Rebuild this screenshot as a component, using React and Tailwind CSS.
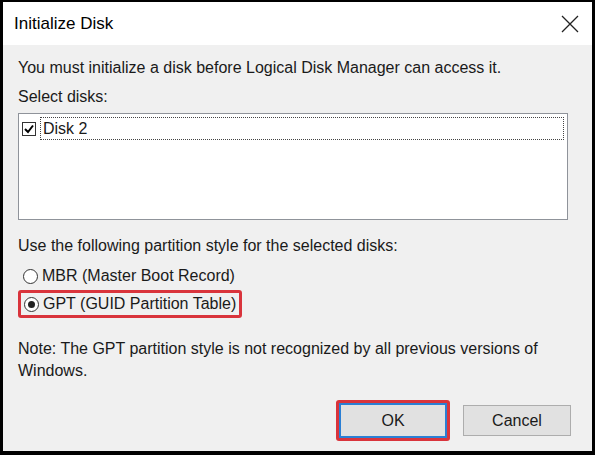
import React from 'react';

const Radio = ({ checked }) => (
    <span className="w-[15px] h-[15px] rounded-full border border-[#333] bg-white flex items-center justify-center shrink-0">
        {checked && <span className="w-[7px] h-[7px] rounded-full bg-[#222]" />}
    </span>
);

const App = () => {
    return (
        <div className="w-[595px] h-[455px] bg-black pl-[3px] pr-[3px] pt-[2px] pb-[4px] font-['Liberation_Sans',Arial,sans-serif] text-[16px] text-[#1a1a1a]">
            <div className="w-full h-full flex flex-col bg-[#f0f0f0]">
                {/* Title bar */}
                <div className="h-[43px] bg-white flex items-center justify-between pl-[11px] pr-[10px] shrink-0">
                    <span className="text-[17px] text-black">Initialize Disk</span>
                    <svg width="18" height="18" viewBox="0 0 18 18" className="mr-[3px]">
                        <path d="M1 1 L17 17 M17 1 L1 17" stroke="#222" strokeWidth="1.3" />
                    </svg>
                </div>

                {/* Body */}
                <div className="flex-1 flex flex-col pl-[15px] pr-[24px] pt-[14px]">
                    <p className="leading-[18px]">You must initialize a disk before Logical Disk Manager can access it.</p>
                    <p className="leading-[18px] mt-[11px]">Select disks:</p>

                    <div className="mt-[7px] h-[107px] bg-white border border-[#8f939a] p-[3px]">
                        <div className="flex items-center gap-[4px]">
                            <span className="w-[14px] h-[14px] border border-[#333] bg-white flex items-center justify-center shrink-0">
                                <svg width="10" height="10" viewBox="0 0 10 10">
                                    <path d="M1 5 L4 8 L9 1.5" stroke="#000" strokeWidth="2" fill="none" />
                                </svg>
                            </span>
                            <div className="flex-1 h-[23px] border border-dotted border-[#444] flex items-center pl-[2px]">Disk 2</div>
                        </div>
                    </div>

                    <p className="leading-[18px] mt-[17px]">Use the following partition style for the selected disks:</p>

                    <div className="mt-[12px] flex items-center gap-[4px] pl-[5px] h-[18px]">
                        <Radio />
                        <span>MBR (Master Boot Record)</span>
                    </div>
                    <div className="mt-[5px] self-start flex items-center gap-[4px] pl-[3px] pr-[3px] h-[28px] border-[3px] border-[#d9343c] rounded-[3px]">
                        <Radio checked />
                        <span>GPT (GUID Partition Table)</span>
                    </div>

                    <p className="leading-[22px] mt-[20px]">
                        Note: The GPT partition style is not recognized by all previous versions of<br />Windows.
                    </p>

                    <div className="mt-auto mb-[10px] flex justify-end items-center gap-[13px] mr-[-3px]">
                        <div className="border-[3px] border-[#d9343c] rounded-[3px]">
                            <button className="w-[108px] h-[35px] bg-[#e1e1e1] border-2 border-[#2a7fd4] text-[16px]">OK</button>
                        </div>
                        <button className="w-[108px] h-[31px] bg-[#e1e1e1] border border-[#adadad] text-[16px]">Cancel</button>
                    </div>
                </div>
            </div>
        </div>
    );
};

export default App;
